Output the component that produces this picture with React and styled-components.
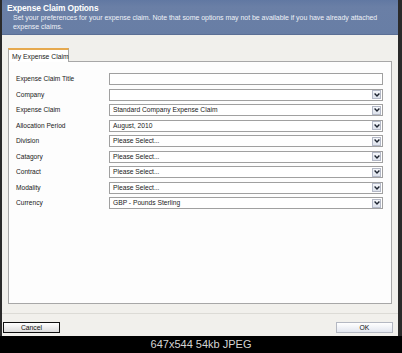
import React from 'react';
import styled, { createGlobalStyle } from 'styled-components';

const GlobalStyle = createGlobalStyle`
  html, body {
    margin: 0;
    padding: 0;
    background: #000;
  }
  body {
    font-family: 'Liberation Sans', Arial, sans-serif;
  }
`;

const fields = [
  { label: 'Expense Claim Title', value: '', select: false },
  { label: 'Company', value: '', select: true },
  { label: 'Expense Claim', value: 'Standard Company Expense Claim', select: true },
  { label: 'Allocation Period', value: 'August, 2010', select: true },
  { label: 'Division', value: 'Please Select...', select: true },
  { label: 'Catagory', value: 'Please Select...', select: true },
  { label: 'Contract', value: 'Please Select...', select: true },
  { label: 'Modality', value: 'Please Select...', select: true },
  { label: 'Currency', value: 'GBP - Pounds Sterling', select: true },
];

function Chevron() {
  return (
    <svg width="6" height="4" viewBox="0 0 6 4">
      <path d="M0.6 0.6 L3 3 L5.4 0.6" fill="none" stroke="#1d2430" strokeWidth="1.4" />
    </svg>
  );
}

function App() {
  return (
    <>
      <GlobalStyle />
      <Window>
        <Header>
          <Title>Expense Claim Options</Title>
          <Subtitle>
            Set your preferences for your expense claim. Note that some options may not be available if you have already attached
            <br />
            expense claims.
          </Subtitle>
        </Header>
        <Body>
          <Tabs>
            <Tab>My Expense Claim</Tab>
          </Tabs>
          <Panel>
            <Form>
              {fields.map((f) => (
                <Row key={f.label}>
                  <Label>{f.label}</Label>
                  <Field>
                    <FieldText>{f.value}</FieldText>
                    {f.select && (
                      <ArrowBox>
                        <Chevron />
                      </ArrowBox>
                    )}
                  </Field>
                </Row>
              ))}
            </Form>
          </Panel>
        </Body>
        <Footer>
          <Button primary>Cancel</Button>
          <Button>OK</Button>
        </Footer>
      </Window>
      <Caption>647x544 54kb JPEG</Caption>
    </>
  );
}

export default App;

const Window = styled.div`
  width: 402px;
  height: 336px;
  box-sizing: border-box;
  border-left: 2px solid #2a2a2a;
  border-right: 4px solid #2a2a2a;
  background: #f1f0ec;
  display: flex;
  flex-direction: column;
`;

const Header = styled.div`
  height: 35px;
  box-sizing: border-box;
  background: linear-gradient(#6178a2, #6a7fa6 20%, #687ea5);
  border-bottom: 1px solid #5b6f95;
  padding: 3px 5px 0;
  color: #fff;
`;

const Title = styled.div`
  font-size: 8.4px;
  font-weight: bold;
  line-height: 10px;
  letter-spacing: -0.1px;
`;

const Subtitle = styled.div`
  font-size: 7px;
  line-height: 9px;
  padding-left: 6px;
  color: #eef1f7;
  letter-spacing: -0.04px;
  white-space: nowrap;
`;

const Body = styled.div`
  padding: 13px 6px 0 6px;
`;

const Tabs = styled.div`
  display: flex;
  position: relative;
  z-index: 1;
`;

const Tab = styled.div`
  width: 61px;
  height: 14px;
  box-sizing: border-box;
  background: #fff;
  border: 1px solid #a7a7a7;
  border-top: 2px solid #e6a94e;
  border-bottom: none;
  margin-bottom: -1px;
  padding: 2px 0 0 3px;
  font-size: 6.8px;
  line-height: 9px;
  color: #1a1a1a;
  white-space: nowrap;
`;

const Panel = styled.div`
  height: 243px;
  box-sizing: border-box;
  border: 1px solid #a7a7a7;
  background: #fdfdfd;
  padding: 11px 8px 0 7px;
`;

const Form = styled.div`
  display: grid;
  grid-auto-rows: 15.5px;
`;

const Row = styled.div`
  display: grid;
  grid-template-columns: 93px 1fr;
  align-items: start;
`;

const Label = styled.div`
  font-size: 6.6px;
  line-height: 12px;
  color: #202020;
  white-space: nowrap;
`;

const Field = styled.div`
  height: 12px;
  box-sizing: border-box;
  border: 1px solid #a0a0a0;
  background: #fff;
  display: flex;
  align-items: center;
  justify-content: space-between;
`;

const FieldText = styled.div`
  font-size: 6.7px;
  line-height: 10px;
  padding-left: 3px;
  color: #1a1a1a;
  white-space: nowrap;
`;

const ArrowBox = styled.div`
  width: 9px;
  height: 9px;
  margin-right: 1px;
  box-sizing: border-box;
  border: 1px solid #b3b8c6;
  background: linear-gradient(#f4f6fa, #dde2ec);
  display: flex;
  align-items: center;
  justify-content: center;
`;

const Footer = styled.div`
  margin-top: 9px;
  border-top: 1px solid #dcdbd6;
  padding: 8px 5px 0 1px;
  display: flex;
  justify-content: space-between;
`;

const Button = styled.div`
  width: 57px;
  height: 11px;
  box-sizing: border-box;
  border: 1px solid ${(p) => (p.primary ? '#111' : '#b4b8c2')};
  background: ${(p) =>
    p.primary ? 'linear-gradient(#ffffff, #dcdcdc)' : 'linear-gradient(#ffffff, #e2e6ef)'};
  font-size: 6.8px;
  line-height: 9px;
  color: #111;
  text-align: center;
`;

const Caption = styled.div`
  width: 402px;
  height: 17px;
  text-align: center;
  font-size: 11px;
  line-height: 16px;
  color: #d4d4d4;
`;
